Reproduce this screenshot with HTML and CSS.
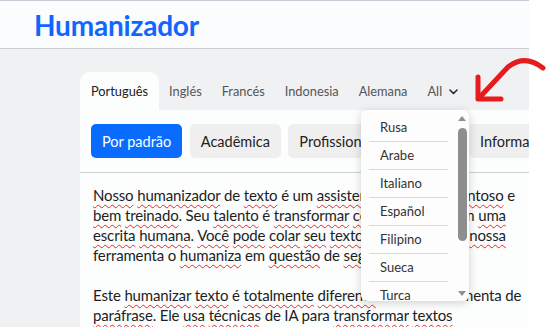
FILE: index.html
```html
<!DOCTYPE html>
<html lang="pt">
<head>
    <meta charset="UTF-8">
    <meta name="viewport" content="width=device-width, initial-scale=1.0">
    <title>Humanizador</title>
    <link rel="stylesheet" href="styles.css">
</head>
<body>
<div class="page">
    <header class="topbar">
        <h1>Humanizador</h1>
    </header>

    <main class="tool">
        <nav class="tabs">
            <span class="tab active">Português</span>
            <span class="tab">Inglés</span>
            <span class="tab">Francés</span>
            <span class="tab">Indonesia</span>
            <span class="tab">Alemana</span>
            <span class="tab">All
                <svg class="chevron" width="9" height="6" viewBox="0 0 9 6"><path d="M1 1 L4.5 4.5 L8 1" fill="none" stroke="#222" stroke-width="1.5" stroke-linecap="round" stroke-linejoin="round"/></svg>
            </span>
        </nav>

        <section class="card">
            <div class="modes">
                <button class="mode-btn active">Por padrão</button>
                <button class="mode-btn">Acadêmica</button>
                <button class="mode-btn">Profissional</button>
                <button class="mode-btn">Simples</button>
                <button class="mode-btn">Informal</button>
            </div>
            <div class="editor">
                <p>
                    <span class="sp">Nosso</span> <span class="sp">humanizador</span> de <span class="sp">texto</span> é um <span class="sp">assistente</span> <span class="sp">bastante</span> <span class="sp">talentoso</span> e<br>
                    <span class="sp">bem</span> <span class="sp">treinado</span>. Seu <span class="sp">talento</span> é <span class="sp">transformar</span> <span class="sp">conteúdo</span> de IA em <span class="sp">uma</span><br>
                    <span class="sp">escrita</span> <span class="sp">humana</span>. <span class="sp">Você</span> <span class="sp">pode</span> <span class="sp">colar</span> <span class="sp">seu</span> <span class="sp">texto</span> <span class="sp">gerado</span> por IA e <span class="sp">nossa</span><br>
                    ferramenta o <span class="sp">humaniza</span> em <span class="sp">questão</span> de <span class="sp">segundos</span>.
                </p>
                <p>
                    Este <span class="sp">humanizar</span> <span class="sp">texto</span> é <span class="sp">totalmente</span> <span class="sp">diferente</span> de uma ferramenta de<br>
                    <span class="sp">paráfrase</span>. Ele <span class="sp">usa</span> <span class="sp">técnicas</span> de IA para <span class="sp">transformar</span> <span class="sp">textos</span>
                </p>
            </div>
        </section>

        <div class="dropdown">
            <ul class="lang-list">
                <li>Rusa</li>
                <li>Arabe</li>
                <li>Italiano</li>
                <li>Español</li>
                <li>Filipino</li>
                <li>Sueca</li>
                <li>Turca</li>
            </ul>
            <div class="scrollbar">
                <span class="arrow-up"></span>
                <span class="thumb"></span>
                <span class="arrow-down"></span>
            </div>
        </div>
    </main>
</div>

<svg class="pointer" width="547" height="327" viewBox="0 0 547 327">
    <path d="M543 68 C 534 61, 522 56, 508 67 L 479 98" fill="none" stroke="#e61c1c" stroke-width="5" stroke-linecap="round" stroke-linejoin="round"/>
    <path d="M478 77 L 478 99 L 501 99" fill="none" stroke="#e61c1c" stroke-width="5" stroke-linecap="round" stroke-linejoin="round"/>
</svg>
</body>
</html>
```

FILE: styles.css
```css
body {
    margin: 0;
    background-color: #ffffff;
    font-family: Lato, "Noto Sans", sans-serif;
    color: #222;
    position: relative;
    overflow: hidden;
}

.page {
    width: 529px;
    height: 327px;
    background-color: #f0f1f3;
    overflow: hidden;
}

.topbar {
    height: 47px;
    background-color: #fbfcfd;
    border-top: 1px solid #c6ccd6;
    border-bottom: 1px solid #c9cdd2;
    padding-left: 34px;
    display: flex;
    align-items: center;
}

.topbar h1 {
    margin: 0;
    font-size: 28px;
    font-weight: bold;
    color: #1166ff;
    letter-spacing: -0.2px;
}

.tool {
    position: relative;
    padding: 23px 0 0 80px;
}

.tabs {
    display: flex;
    height: 38px;
}

.tab {
    display: flex;
    align-items: center;
    gap: 7px;
    padding: 0 10px;
    font-size: 12.8px;
    color: #555;
}

.tab.active {
    padding: 0 11px;
    background-color: #fcfdfd;
    border-radius: 10px 10px 0 0;
    color: #222;
}

.chevron {
    margin-top: 1px;
}

.card {
    background-color: #fcfdfd;
    height: 230px;
}

.modes {
    display: flex;
    gap: 7.5px;
    padding: 14px 11px;
    border-bottom: 1px solid #ccd1d1;
    white-space: nowrap;
    overflow: hidden;
}

.mode-btn {
    flex-shrink: 0;
    height: 34px;
    padding: 0 11px;
    border: none;
    border-radius: 5px;
    background-color: #efefef;
    font-family: Lato, "Noto Sans", sans-serif;
    font-size: 14.5px;
    color: #222;
}

.mode-btn.active {
    background-color: #0a6cff;
    color: #fff;
}

.editor {
    padding: 12px 13px;
    font-size: 15px;
    letter-spacing: -0.15px;
    line-height: 20px;
    color: #1e1e1e;
    white-space: nowrap;
}

.editor p {
    margin: 0 0 20px 0;
}

.sp {
    text-decoration: underline wavy #e82727;
    text-decoration-thickness: 1px;
    text-underline-offset: 3px;
}

.dropdown {
    position: absolute;
    left: 361px;
    top: 61px;
    width: 108px;
    height: 191px;
    background-color: #fdfdfd;
    border-radius: 6px;
    box-shadow: 0 2px 10px rgba(0, 0, 0, 0.18);
    overflow: hidden;
    display: flex;
}

.lang-list {
    list-style: none;
    margin: 0;
    padding: 4px 0 0 8px;
    width: 79px;
}

.lang-list li {
    height: 27px;
    line-height: 27px;
    padding-left: 11px;
    border-bottom: 1px solid #d6dbda;
    font-size: 13px;
    color: #333;
}

.scrollbar {
    margin-left: 10px;
    width: 9px;
    position: relative;
}

.arrow-up,
.arrow-down {
    position: absolute;
    left: 0;
    width: 0;
    height: 0;
    border-left: 4.5px solid transparent;
    border-right: 4.5px solid transparent;
}

.arrow-up {
    top: 6px;
    border-bottom: 5px solid #8f8f8f;
}

.arrow-down {
    top: 181px;
    border-top: 5px solid #8f8f8f;
}

.thumb {
    position: absolute;
    left: 0;
    top: 18px;
    width: 9px;
    height: 113px;
    border-radius: 5px;
    background-color: #8e8e8e;
}

.pointer {
    position: absolute;
    left: 0;
    top: 0;
    pointer-events: none;
}
```
